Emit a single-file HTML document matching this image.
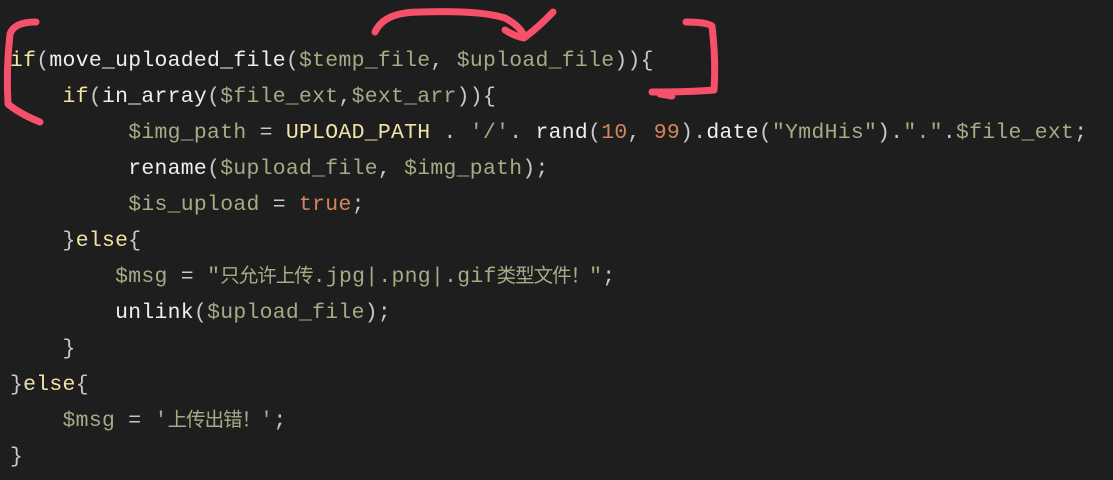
<!DOCTYPE html>
<html><head><meta charset="utf-8"><style>
html,body{margin:0;padding:0;background:#1e1e1e;width:1113px;height:480px;overflow:hidden}
pre{position:absolute;left:10px;top:43px;margin:0;font-family:"Liberation Mono","Noto Sans CJK SC",monospace;font-size:21.4px;line-height:36px;color:#f0f0ea;letter-spacing:0.3px}
pre span{line-height:10px}
.k{color:#f2e3a6}.v{color:#a3ad84}.s{color:#a3ad84}.n{color:#d7845d}.p{color:#c8c8c8}.c{color:#f2e3a6}
.z{font-family:"Noto Sans CJK SC",sans-serif;font-size:19.5px;letter-spacing:-1px}
svg{position:absolute;left:0;top:0}
</style></head><body>
<pre><span class="k">if</span><span class="p">(</span>move_uploaded_file<span class="p">(</span><span class="v">$temp_file</span><span class="p">, </span><span class="v">$upload_file</span><span class="p">)){</span>
    <span class="k">if</span><span class="p">(</span>in_array<span class="p">(</span><span class="v">$file_ext</span><span class="p">,</span><span class="v">$ext_arr</span><span class="p">)){</span>
         <span class="v">$img_path</span> <span class="p">=</span> <span class="c">UPLOAD_PATH</span> <span class="p">.</span> <span class="s">'/'</span><span class="p">.</span> rand<span class="p">(</span><span class="n">10</span><span class="p">,</span> <span class="n">99</span><span class="p">).</span>date<span class="p">(</span><span class="s">"YmdHis"</span><span class="p">).</span><span class="s">"."</span><span class="p">.</span><span class="v">$file_ext</span><span class="p">;</span>
         rename<span class="p">(</span><span class="v">$upload_file</span><span class="p">,</span> <span class="v">$img_path</span><span class="p">);</span>
         <span class="v">$is_upload</span> <span class="p">=</span> <span class="n">true</span><span class="p">;</span>
    <span class="p">}</span><span class="k">else</span><span class="p">{</span>
        <span class="v">$msg</span> <span class="p">=</span> <span class="s">"<span class="z">只允许上传</span>.jpg|.png|.gif<span class="z">类型文件！</span>"</span><span class="p">;</span>
        unlink<span class="p">(</span><span class="v">$upload_file</span><span class="p">);</span>
    <span class="p">}</span>
<span class="p">}</span><span class="k">else</span><span class="p">{</span>
    <span class="v">$msg</span> <span class="p">=</span> <span class="s">'<span class="z">上传出错！</span>'</span><span class="p">;</span>
<span class="p">}</span></pre>
<svg width="1113" height="480" fill="none" stroke="#f7506a" stroke-width="7" stroke-linecap="round" stroke-linejoin="round">
<path d="M36,22 Q14,22 10,34 Q6,70 8,104 Q20,114 40,122"/>
<path d="M375,32 Q384,12 420,12 Q480,10 505,18 Q520,26 524,36 M505,30 Q514,36 524,38 Q540,26 553,12"/>
<path d="M686,22 Q706,22 712,26 Q716,60 714,90 Q690,92 652,92 M660,94 L672,96"/>
</svg>
</body></html>
